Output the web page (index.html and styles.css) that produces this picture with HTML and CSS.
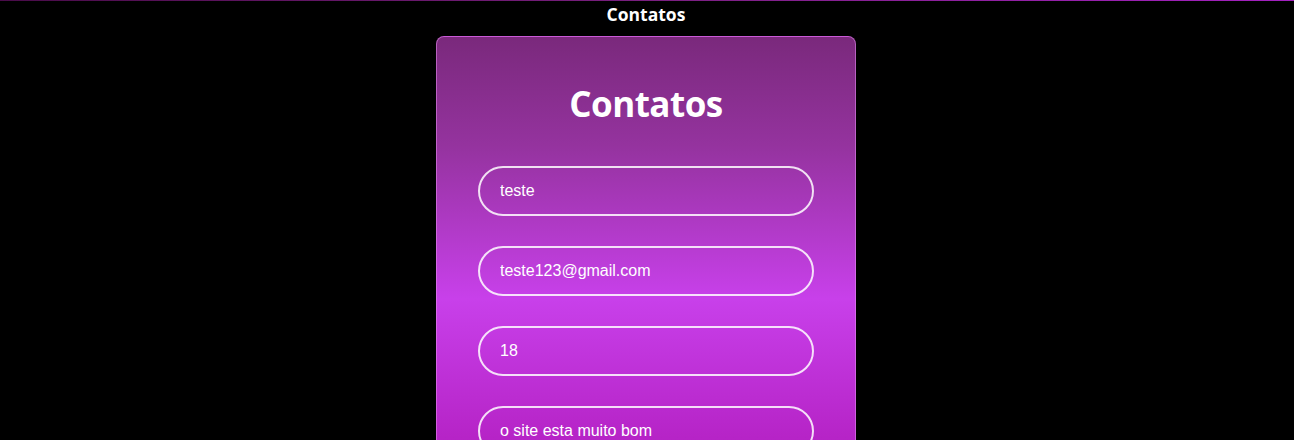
FILE: index.html
```html
<!DOCTYPE html>
<html lang="pt">
<head>
<meta charset="utf-8">
<title>Contatos</title>
<link rel="stylesheet" href="styles.css">
</head>
<body>
<div class="topline"></div>
<header class="top-title">Contatos</header>
<main class="card">
  <h1 class="card-title">Contatos</h1>
  <form class="form">
    <input class="field" type="text" value="teste">
    <input class="field" type="text" value="teste123@gmail.com">
    <input class="field" type="text" value="18">
    <input class="field" type="text" value="o site esta muito bom">
    <button class="send" type="button">Enviar</button>
  </form>
</main>
</body>
</html>
```

FILE: styles.css
```css
html, body {
  margin: 0;
  padding: 0;
  background: #000;
}
body {
  font-family: "Open Sans", "Noto Sans", sans-serif;
  color: #fff;
  display: flex;
  flex-direction: column;
  align-items: center;
}
.topline {
  align-self: stretch;
  height: 1px;
  background: linear-gradient(to right, #4a0c4a, #7a2080 50%, #a321c0);
}
.top-title {
  font-weight: 700;
  font-size: 17.5px;
  line-height: 26px;
  height: 35px;
  letter-spacing: 0;
  margin-right: 2px;
}
.card {
  box-sizing: border-box;
  width: 420px;
  margin-right: 2px;
  border: 1px solid rgba(230, 140, 240, 0.55);
  border-radius: 8px;
  padding: 44px 41px 60px;
  background: linear-gradient(to bottom, #7a297c 0px, #95339f 110px, #c840ea 262px, #b624c7 400px, #a81cb8 560px);
}
.card-title {
  margin: 0 0 39px;
  text-align: center;
  font-size: 35px;
  line-height: 46px;
  font-weight: 700;
  letter-spacing: -0.5px;
}
.form {
  display: flex;
  flex-direction: column;
  gap: 30px;
}
.field {
  box-sizing: border-box;
  height: 50px;
  width: 100%;
  border: 2px solid rgba(255, 255, 255, 0.85);
  border-radius: 25px;
  background: transparent;
  padding: 0 20px;
  font-family: "Liberation Sans", Arial, sans-serif;
  font-size: 16px;
  color: #fff;
  outline: none;
}
.send {
  height: 46px;
  border: 0;
  border-radius: 25px;
  background: #fff;
  color: #7a297c;
  font-weight: 700;
  font-size: 16px;
}
```
